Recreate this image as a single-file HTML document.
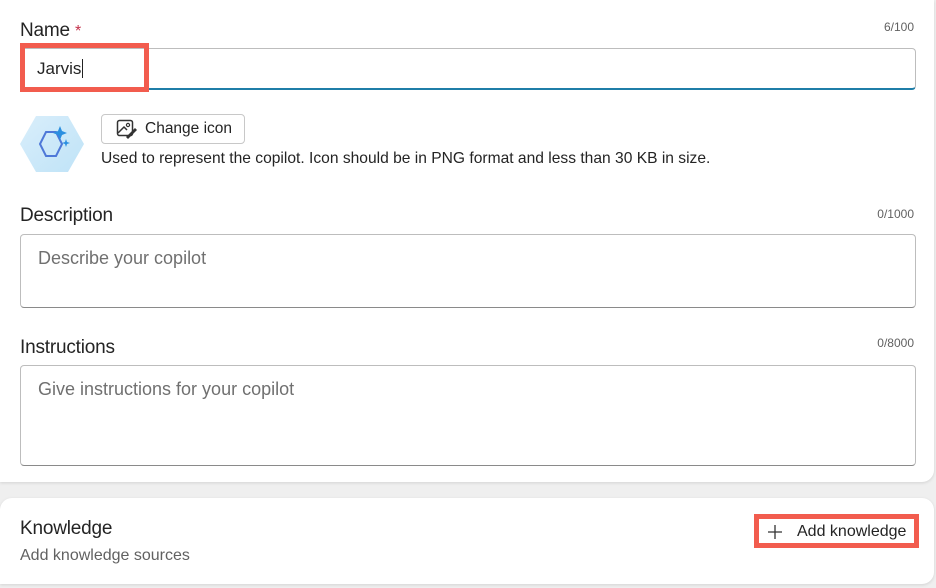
<!DOCTYPE html>
<html><head><style>
*{box-sizing:border-box;margin:0;padding:0}
body{width:936px;height:588px;background:#efefef;font-family:"Liberation Sans",sans-serif;position:relative;overflow:hidden;color:#242424}
.card{position:absolute;left:0;width:934px;background:#fff;border-radius:0 0 12px 0;box-shadow:0 1px 3px rgba(0,0,0,.12)}
.abs{position:absolute}
.lbl{font-size:19px;color:#242424;letter-spacing:-.2px}
.cnt{font-size:12px;color:#616161;right:20px}
.box{position:absolute;left:20px;width:896px;border:1px solid #bdbdbd;border-bottom:1px solid #8a8a8a;border-radius:4px;background:#fff}
.ph{position:absolute;left:17px;font-size:18px;color:#707070}
</style></head><body>
<div class="card" style="top:0;height:482px">
 <div class="abs lbl" style="left:20px;top:20px">Name <span style="color:#c4314b;font-size:16px">*</span></div>
 <div class="abs cnt" style="top:20px">6/100</div>
 <div class="box" style="top:48px;height:42px;border-bottom:2px solid #0f6cbd;border-color:#bdbdbd #bdbdbd #1f7ea8"></div>
 <div class="abs" style="left:20px;top:43px;width:129px;height:49px;border:5px solid #f25c4e"></div>
 <div class="abs" style="left:37px;top:59px;font-size:17px">Jarvis<span style="border-left:1px solid #222;margin-left:1px"></span></div>
 <svg class="abs" style="left:20px;top:114px" width="64" height="60" viewBox="0 0 64 60">
  <defs><linearGradient id="g" x1="0" y1="0" x2="1" y2="1"><stop offset="0" stop-color="#d9eefb"/><stop offset="1" stop-color="#bfe3f7"/></linearGradient></defs>
  <polygon points="16,2 48,2 64,30 48,58 16,58 0,30" fill="url(#g)"/>
  <polygon points="26,18 36,18 42,30 36,42 26,42 20,30" fill="none" stroke="#4e78d8" stroke-width="2"/>
  <path d="M40 12 L42 17 L47 19 L42 21 L40 26 L38 21 L33 19 L38 17Z" fill="#2b8fe0"/>
  <path d="M46 25 L47 28 L50 29 L47 30 L46 33 L45 30 L42 29 L45 28Z" fill="#2b8fe0"/>
 </svg>
 <div class="abs" style="left:101px;top:114px;width:144px;height:30px;border:1px solid #c8c8c8;border-radius:4px"></div>
 <svg class="abs" style="left:116px;top:119px" width="22" height="20" viewBox="0 0 22 20"><rect x="1.5" y="1.5" width="15" height="15" rx="2" fill="none" stroke="#333" stroke-width="1.5"/><circle cx="12" cy="6" r="1.6" fill="none" stroke="#333" stroke-width="1.2"/><path d="M2 14 L8 8 L11 11" fill="none" stroke="#333" stroke-width="1.5"/><path d="M10 18 L19 9 L21 11 L12 20Z" fill="#333"/></svg>
 <div class="abs" style="left:145px;top:120px;font-size:15.5px">Change icon</div>
 <div class="abs" style="left:101px;top:150px;font-size:15.6px">Used to represent the copilot. Icon should be in PNG format and less than 30 KB in size.</div>
 <div class="abs lbl" style="left:20px;top:205px">Description</div>
 <div class="abs cnt" style="top:207px">0/1000</div>
 <div class="box" style="top:234px;height:74px"><div class="ph" style="top:13px">Describe your copilot</div></div>
 <div class="abs lbl" style="left:20px;top:337px">Instructions</div>
 <div class="abs cnt" style="top:336px">0/8000</div>
 <div class="box" style="top:365px;height:101px"><div class="ph" style="top:13px">Give instructions for your copilot</div></div>
</div>
<div class="card" style="top:498px;height:86px;border-radius:12px 12px 12px 0">
 <div class="abs lbl" style="left:20px;top:20px">Knowledge</div>
 <div class="abs" style="left:20px;top:49px;font-size:16px;color:#616161">Add knowledge sources</div>
 <div class="abs" style="left:754px;top:16px;width:165px;height:34px;border:5px solid #f25c4e"></div>
 <svg class="abs" style="left:767px;top:26px" width="16" height="16" viewBox="0 0 16 16"><path d="M8 1V15M1 8H15" stroke="#333" stroke-width="1.3"/></svg>
 <div class="abs" style="left:797px;top:25px;font-size:16px">Add knowledge</div>
</div>
</body></html>
